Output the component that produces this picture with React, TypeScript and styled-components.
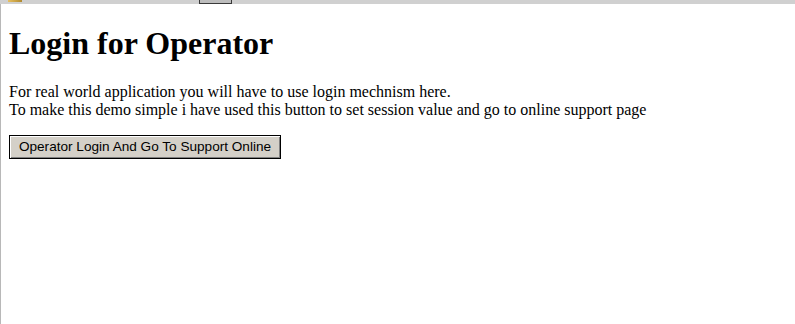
import React from 'react'
import styled, { createGlobalStyle } from 'styled-components'

const GlobalStyle = createGlobalStyle`
  html, body {
    margin: 0;
    padding: 0;
    background: #ffffff;
  }
  body {
    font-family: "Liberation Serif", "Times New Roman", serif;
    color: #000000;
  }
`

const Window = styled.div`
  display: flex;
  flex-direction: column;
  width: 795px;
  height: 324px;
  overflow: hidden;
`

// remnant of the browser chrome cut off at the top
const TopStrip = styled.div`
  height: 4px;
  flex: 0 0 4px;
  background: #d0d0d0;
  position: relative;
`

const StripIcon = styled.div`
  position: absolute;
  left: 8px;
  top: 0;
  width: 14px;
  height: 2px;
  background: linear-gradient(90deg, #e8c060, #b08a30);
`

const StripTab = styled.div`
  position: absolute;
  left: 199px;
  top: 0;
  width: 31px;
  height: 3px;
  background: #bdbdbd;
  border: 1px solid #3a3a3a;
  border-top: none;
`

const Page = styled.div`
  flex: 1;
  border-left: 1px solid #b8b8b8;
  padding: 0 8px;
  display: flow-root;
`

const Heading = styled.h1`
  font-size: 32px;
  font-weight: bold;
  margin: 21px 0 21px;
  line-height: 37px;
`

const Text = styled.p`
  font-size: 16px;
  line-height: 18px;
  margin: 16px 0;
`

const LoginButton = styled.button`
  font-family: "Liberation Sans", Arial, sans-serif;
  font-size: 13.6px;
  color: #000000;
  background: #d4d0c8;
  width: 272px;
  height: 24px;
  padding: 0 0 1px;
  border: 1px solid #000000;
  box-shadow: inset 1px 1px 0 #ffffff, inset -1px -1px 0 #808080;
  cursor: pointer;
`

const App: React.FC = () => {
  return (
    <>
      <GlobalStyle />
      <Window>
        <TopStrip>
          <StripIcon />
          <StripTab />
        </TopStrip>
        <Page>
          <Heading>Login for Operator</Heading>
          <Text>
            For real world application you will have to use login mechnism here.
            <br />
            To make this demo simple i have used this button to set session value and go to online support page
          </Text>
          <LoginButton type="button">Operator Login And Go To Support Online</LoginButton>
        </Page>
      </Window>
    </>
  )
}

export default App
